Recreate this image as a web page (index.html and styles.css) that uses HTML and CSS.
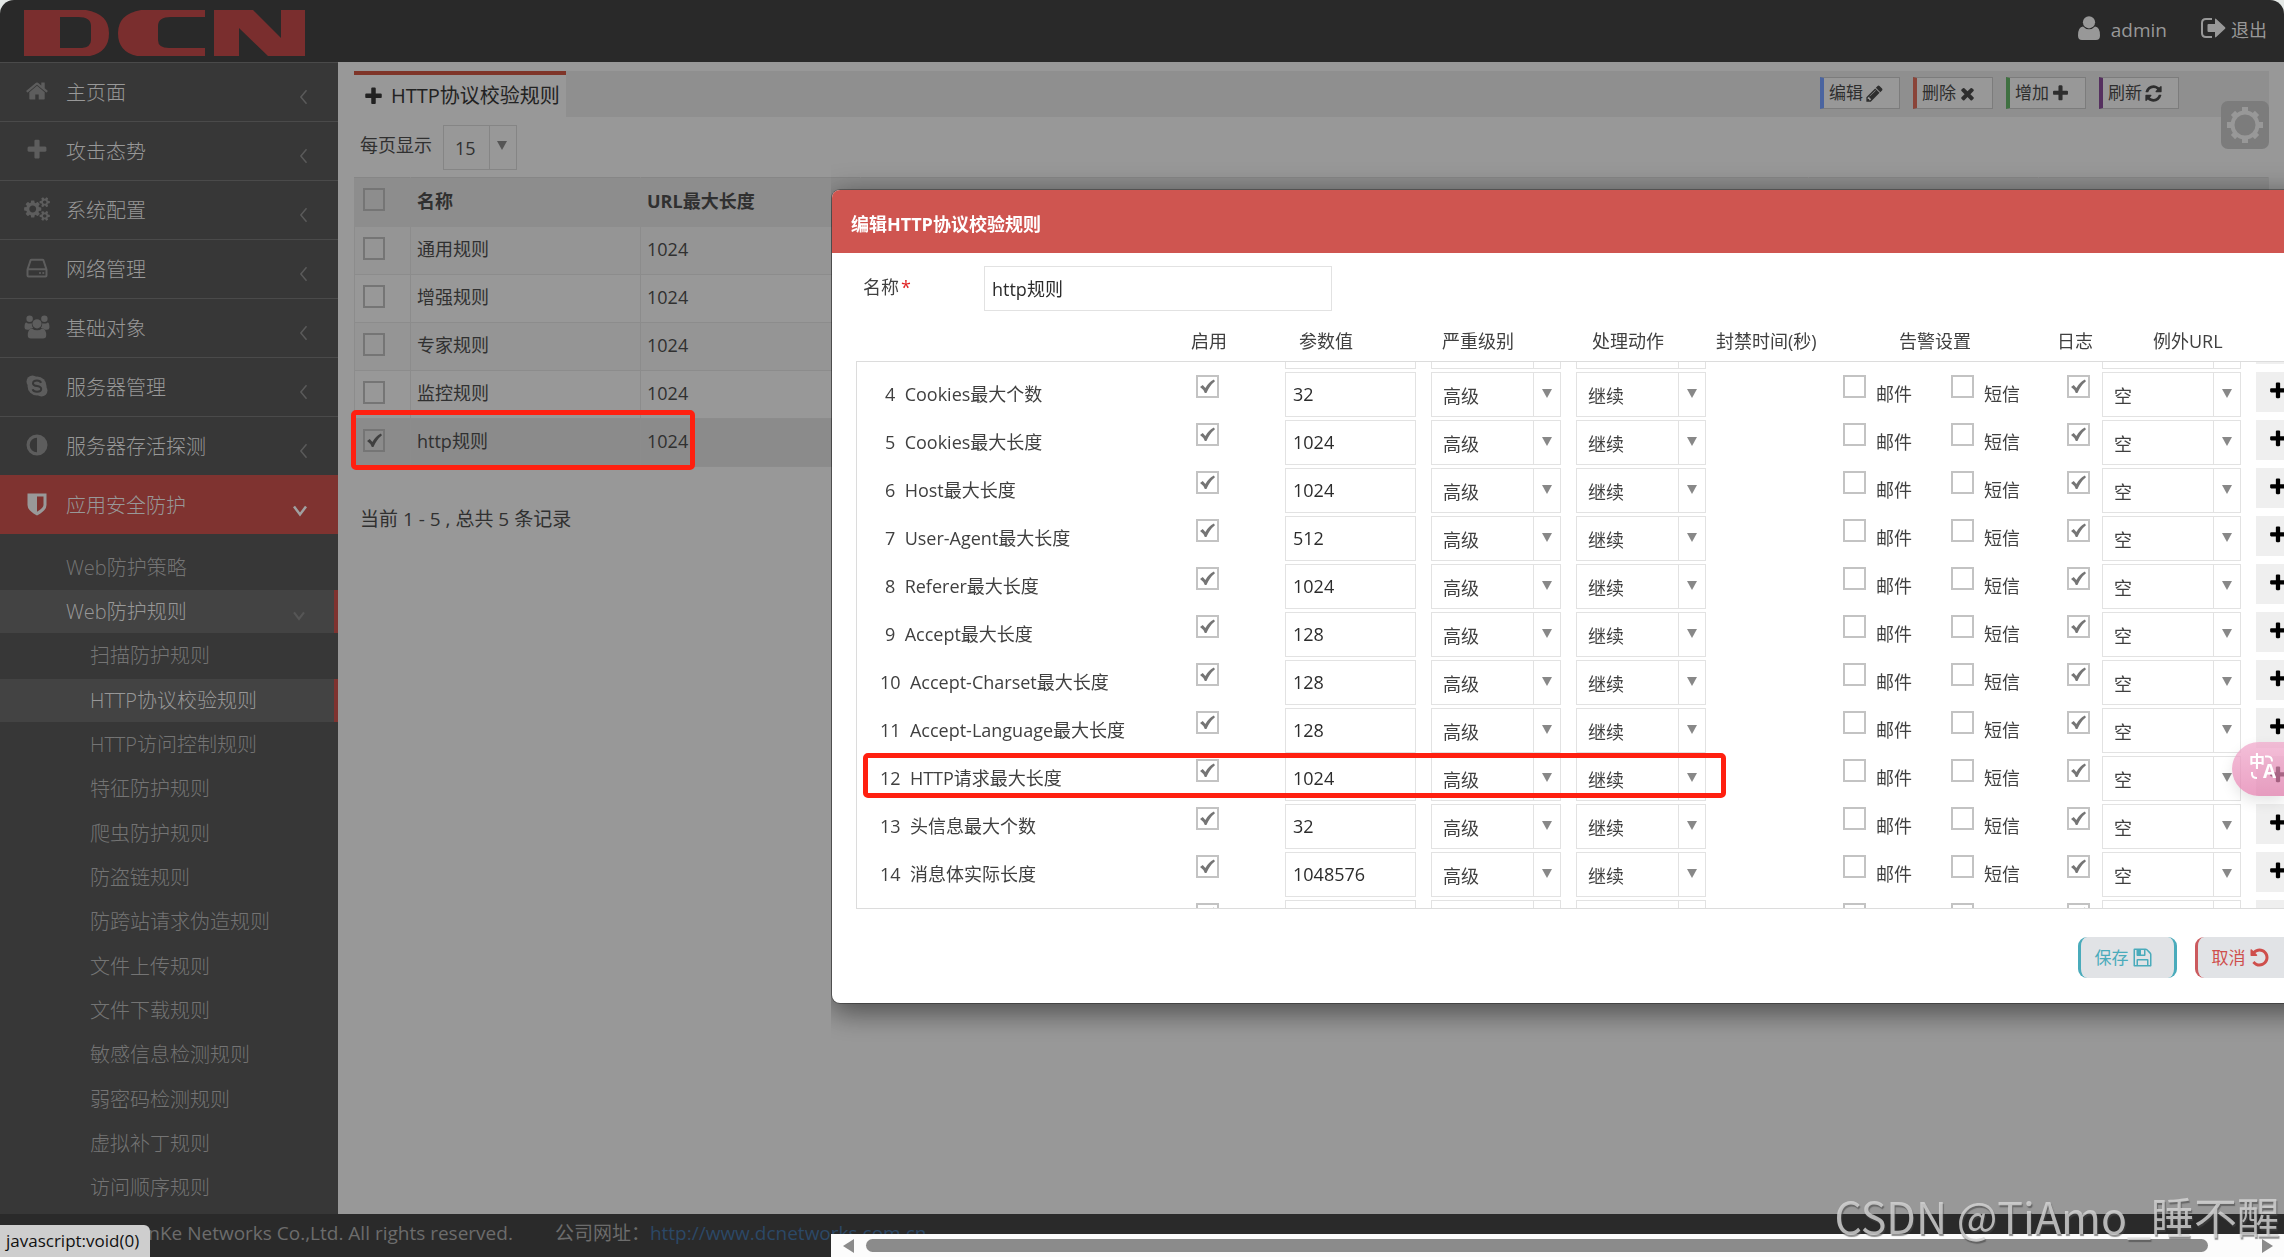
FILE: index.html
```html
<!DOCTYPE html>
<html lang="zh-CN">
<head>
<meta charset="utf-8">
<title>HTTP协议校验规则</title>
<link rel="stylesheet" href="styles.css">
</head>
<body>
<svg class="sprite" aria-hidden="true">
  <symbol id="i-plus" viewBox="0 0 1792 1792"><path d="M1600 736v192q0 40-28 68t-68 28h-416v416q0 40-28 68t-68 28h-192q-40 0-68-28t-28-68v-416h-416q-40 0-68-28t-28-68v-192q0-40 28-68t68-28h416v-416q0-40 28-68t68-28h192q40 0 68 28t28 68v416h416q40 0 68 28t28 68z"/></symbol>
  <symbol id="i-home" viewBox="0 0 1792 1792"><path d="M1472 992v480q0 26-19 45t-45 19h-384v-384h-256v384h-384q-26 0-45-19t-19-45v-480q0-1 .5-3t.5-3l575-474 575 474q1 2 1 6zm223-69l-62 74q-8 9-21 11h-3q-13 0-21-7l-692-577-692 577q-12 8-24 7-13-2-21-11l-62-74q-8-10-7-23.5t11-21.5l719-599q32-26 76-26t76 26l244 204v-195q0-14 9-23t23-9h192q14 0 23 9t9 23v408l219 182q10 8 11 21.5t-7 23.5z"/></symbol>
  <symbol id="i-cogs" viewBox="0 0 1920 1792"><path d="M896 896q0-106-75-181t-181-75-181 75-75 181 75 181 181 75 181-75 75-181zm768 512q0-52-38-90t-90-38-90 38-38 90q0 53 37.5 90.5t90.5 37.5 90.5-37.5 37.5-90.5zm0-1024q0-52-38-90t-90-38-90 38-38 90q0 53 37.5 90.5t90.5 37.5 90.5-37.5 37.5-90.5zm-384 421v185q0 10-7 19.5t-16 10.5l-155 24q-11 35-32 76 34 48 90 115 7 11 7 20 0 12-7 19-23 30-82.5 89.5t-78.5 59.5q-11 0-21-7l-115-90q-37 19-77 31-11 108-23 155-7 24-30 24h-186q-11 0-20-7.5t-10-17.5l-23-153q-34-10-75-31l-118 89q-7 7-20 7-11 0-21-8-144-133-144-160 0-9 7-19 10-14 41-53t47-61q-23-44-35-82l-152-24q-10-1-17-9.5t-7-19.5v-185q0-10 7-19.5t16-10.5l155-24q11-35 32-76-34-48-90-115-7-11-7-20 0-12 7-20 22-30 82-89t79-59q11 0 21 7l115 90q34-18 77-32 11-108 23-154 7-24 30-24h186q11 0 20 7.5t10 17.5l23 153q34 10 75 31l118-89q8-7 20-7 11 0 21 8 144 133 144 160 0 8-7 19-12 16-42 54t-45 60q23 48 34 82l152 23q10 2 17 10.5t7 19.5zm640 533v140q0 16-149 31-12 27-30 52 51 113 51 138 0 4-4 7-122 71-124 71-8 0-46-47t-52-68q-20 2-30 2t-30-2q-14 21-52 68t-46 47q-2 0-124-71-4-3-4-7 0-25 51-138-18-25-30-52-149-15-149-31v-140q0-16 149-31 13-29 30-52-51-113-51-138 0-4 4-7 4-2 35-20t59-34 30-16q8 0 46 46.5t52 67.5q20-2 30-2t30 2q51-71 92-112l6-2q4 0 124 70 4 3 4 7 0 25-51 138 17 23 30 52 149 15 149 31zm0-1024v140q0 16-149 31-12 27-30 52 51 113 51 138 0 4-4 7-122 71-124 71-8 0-46-47t-52-68q-20 2-30 2t-30-2q-14 21-52 68t-46 47q-2 0-124-71-4-3-4-7 0-25 51-138-18-25-30-52-149-15-149-31v-140q0-16 149-31 13-29 30-52-51-113-51-138 0-4 4-7 4-2 35-20t59-34 30-16q8 0 46 46.5t52 67.5q20-2 30-2t30 2q51-71 92-112l6-2q4 0 124 70 4 3 4 7 0 25-51 138 17 23 30 52 149 15 149 31z"/></symbol>
  <symbol id="i-hdd" viewBox="0 0 24 24"><path fill="none" stroke="currentColor" stroke-width="2" stroke-linejoin="round" d="M2.500 13.500 5.500 4.500Q5.800 3.800 6.500 3.800H17.500Q18.200 3.800 18.500 4.500L21.500 13.500V19.500Q21.500 20.500 20.500 20.500H3.500Q2.500 20.500 2.500 19.500ZM2.500 13.200H21.500"/><circle cx="15" cy="17" r="1.100"/><circle cx="18.300" cy="17" r="1.100"/></symbol>
  <symbol id="i-users" viewBox="0 0 28 26"><circle cx="6" cy="4" r="3.500"/><circle cx="22" cy="4" r="3.500"/><path d="M2.500 8Q4 9.300 6 9.300q1.300 0 2.300-.4-.2 3 1.600 5.100-3 .2-4.400 2H3.300Q.5 16 .5 13.500.5 8 2.500 8zM25.500 8Q24 9.300 22 9.300q-1.300 0-2.300-.4.2 3-1.600 5.100 3 .2 4.400 2h2.200q2.800 0 2.800-2.500 0-5.500-2-5.500z"/><circle cx="14" cy="9.500" r="5"/><path d="M8.500 14.500q2.500 2 5.500 2t5.500-2q4.500.5 4.500 7.500 0 3.500-3.500 3.500h-13Q4 25.500 4 22q0-7 4.500-7.500z"/></symbol>
  <symbol id="i-skype" viewBox="0 0 24 24"><circle cx="7.500" cy="7.500" r="6"/><circle cx="16.500" cy="16.500" r="6"/><circle cx="12" cy="12" r="9.500"/><path class="cut" d="M16 8.800Q15.200 6.600 12 6.600q-4 0-4 2.800 0 2 4 2.700 4.200.7 4.200 2.900 0 2.700-4.200 2.700-3.600 0-4.400-2.500"/></symbol>
  <symbol id="i-adjust" viewBox="0 0 24 24"><path fill-rule="evenodd" d="M12 1.500a10.500 10.500 0 1 0 0 21 10.500 10.500 0 1 0 0-21zm0 3.200v14.600a7.300 7.300 0 0 1 0-14.600z"/></symbol>
  <symbol id="i-shield" viewBox="0 0 24 24"><path fill-rule="evenodd" d="M2.500 1.500h19V13q0 5.500-9.500 10.500Q2.500 18.500 2.500 13zM12 4.500v15.300q6.500-3.700 6.500-7V4.500z"/></symbol>
  <symbol id="i-left" viewBox="0 0 12 22"><path fill="none" stroke="currentColor" stroke-width="2" d="M10 2 2.500 11 10 20"/></symbol>
  <symbol id="i-down" viewBox="0 0 16 12"><path fill="none" stroke="currentColor" stroke-width="2.500" d="M2 1.500 8 9.500 14 1.500"/></symbol>
  <symbol id="i-user" viewBox="0 0 22 24"><circle cx="11" cy="6.300" r="6.100"/><path d="M5 10.500q2.500 2.800 6 2.800t6-2.800q5 .5 5 9 0 4.500-4 4.500H4q-4 0-4-4.500 0-8.500 5-9z"/></symbol>
  <symbol id="i-logout" viewBox="0 0 25 20"><path fill="none" stroke="currentColor" stroke-width="2" d="M11 1H5Q1 1 1 5v10q0 4 4 4h6"/><path d="M6.500 7Q6.500 6 7.500 6H14V1.500q0-1.500 1.200-.5l8.900 8.300q.6.700 0 1.400L15.200 19q-1.200 1-1.200-.5V14H7.500q-1 0-1-1z"/></symbol>
  <symbol id="i-pencil" viewBox="0 0 1792 1792"><path d="M491 1536l91-91-235-235-91 91v107h128v128h107zm523-928q0-22-22-22-10 0-17 7l-542 542q-7 7-7 17 0 22 22 22 10 0 17-7l542-542q7-7 7-17zm-54-192l416 416-832 832h-416v-416zm683 96q0 53-37 90l-166 166-416-416 166-165q36-38 90-38 53 0 91 38l235 234q37 39 37 91z"/></symbol>
  <symbol id="i-times" viewBox="0 0 1792 1792"><path d="M1490 1322q0 40-28 68l-136 136q-28 28-68 28t-68-28l-294-294-294 294q-28 28-68 28t-68-28l-136-136q-28-28-28-68t28-68l294-294-294-294q-28-28-28-68t28-68l136-136q28-28 68-28t68 28l294 294 294-294q28-28 68-28t68 28l136 136q28 28 28 68t-28 68l-294 294 294 294q28 28 28 68z"/></symbol>
  <symbol id="i-refresh" viewBox="0 0 1792 1792"><path d="M1639 1056q0 5-1 7-64 268-268 434.5t-478 166.5q-146 0-282.500-55t-243.500-157l-129 129q-19 19-45 19t-45-19-19-45v-448q0-26 19-45t45-19h448q26 0 45 19t19 45-19 45l-137 137q71 66 161 102t187 36q134 0 250-65t186-179q11-17 53-117 8-23 30-23h192q13 0 22.500 9.500t9.500 22.500zm25-800v448q0 26-19 45t-45 19h-448q-26 0-45-19t-19-45 19-45l138-138q-148-137-349-137-134 0-250 65t-186 179q-11 17-53 117-8 23-30 23h-199q-13 0-22.500-9.500t-9.500-22.500v-7q65-268 270-434.500t480-166.500q146 0 284 55.500t245 156.500l130-129q19-19 45-19t45 19 19 45z"/></symbol>
  <symbol id="i-undo" viewBox="0 0 1792 1792"><path d="M1664 896q0 156-61 298t-164 245-245 164-298 61q-172 0-327-72.500t-264-204.500q-7-10-6.500-22.500t8.500-20.500l137-138q10-9 25-9 16 2 23 12 73 95 179 147t225 52q104 0 198.500-40.500t163.500-109.500 109.500-163.500 40.500-198.500-40.500-198.500-109.500-163.500-163.500-109.500-198.500-40.500q-98 0-188 35.500t-160 101.500l137 138q31 30 14 69-17 40-59 40h-448q-26 0-45-19t-19-45v-448q0-42 40-59 39-17 69 14l130 129q107-101 244.500-156.500t284.500-55.500q156 0 298 61t245 164 164 245 61 298z"/></symbol>
  <symbol id="i-save" viewBox="0 0 1792 1792"><path d="M512 1536h768v-384h-768v384zm896 0h128v-896q0-14-10-38.500t-20-34.500l-281-281q-10-10-34-20t-39-10v416q0 40-28 68t-68 28h-576q-40 0-68-28t-28-68v-416h-128v1280h128v-416q0-40 28-68t68-28h832q40 0 68 28t28 68v416zm-384-928v-320q0-13-9.500-22.500t-22.500-9.500h-192q-13 0-22.500 9.500t-9.500 22.500v320q0 13 9.500 22.500t22.500 9.500h192q13 0 22.500-9.500t9.500-22.500zm640 32v928q0 40-28 68t-68 28h-1344q-40 0-68-28t-28-68v-1344q0-40 28-68t68-28h928q40 0 88 20t76 48l280 280q28 28 48 76t20 88z"/></symbol>
  <symbol id="i-gear" viewBox="0 0 36 36"><circle cx="18" cy="18" r="12.500" fill="none" stroke="currentColor" stroke-width="4"/><path d="M15 0h6v6h-6zM15 30h6v6h-6zM0 15h6v6H0zM30 15h6v6h-6z"/><path transform="rotate(45 18 18)" d="M15 1h6v5h-6zM15 30h6v5h-6zM1 15h5v6H1zM30 15h5v6h-5z"/></symbol>
</svg>

<div class="page">
  <header class="topbar">
    <svg class="logo" viewBox="0 0 282 46" role="img" aria-label="DCN">
      <path fill-rule="evenodd" d="M0 0H62Q85 4 85 23T66 46H0ZM36 7V38H58Q67 37 67 30V16Q67 7 54 7Z"/>
      <path d="M181 0H117Q94 4 94 23T113 46H181V38H145Q134 38 134 30V16Q134 7 147 7H181Z"/>
      <path d="M190 0H229L257 28V0H281V46H244L215 18V46H190Z"/>
    </svg>
    <nav class="account">
      <a href="#"><svg class="ic-user"><use href="#i-user"/></svg>admin</a>
      <a href="#" class="logout"><svg class="ic-logout"><use href="#i-logout"/></svg>退出</a>
    </nav>
  </header>

  <div class="middle">
    <nav class="sidebar">
      <a class="item" href="#"><svg class="mi"><use href="#i-home"/></svg><span>主页面</span><svg class="chev"><use href="#i-left"/></svg></a>
      <a class="item" href="#"><svg class="mi"><use href="#i-plus"/></svg><span>攻击态势</span><svg class="chev"><use href="#i-left"/></svg></a>
      <a class="item" href="#"><svg class="mi"><use href="#i-cogs"/></svg><span>系统配置</span><svg class="chev"><use href="#i-left"/></svg></a>
      <a class="item" href="#"><svg class="mi"><use href="#i-hdd"/></svg><span>网络管理</span><svg class="chev"><use href="#i-left"/></svg></a>
      <a class="item" href="#"><svg class="mi"><use href="#i-users"/></svg><span>基础对象</span><svg class="chev"><use href="#i-left"/></svg></a>
      <a class="item" href="#"><svg class="mi"><use href="#i-skype"/></svg><span>服务器管理</span><svg class="chev"><use href="#i-left"/></svg></a>
      <a class="item" href="#"><svg class="mi"><use href="#i-adjust"/></svg><span>服务器存活探测</span><svg class="chev"><use href="#i-left"/></svg></a>
      <a class="item active" href="#"><svg class="mi"><use href="#i-shield"/></svg><span>应用安全防护</span><svg class="chev"><use href="#i-down"/></svg></a>
      <div class="submenu">
        <a href="#">Web防护策略</a>
        <a href="#" class="on">Web防护规则<svg class="chev"><use href="#i-down"/></svg></a>
        <a href="#" class="deep">扫描防护规则</a>
        <a href="#" class="deep on">HTTP协议校验规则</a>
        <a href="#" class="deep">HTTP访问控制规则</a>
        <a href="#" class="deep">特征防护规则</a>
        <a href="#" class="deep">爬虫防护规则</a>
        <a href="#" class="deep">防盗链规则</a>
        <a href="#" class="deep">防跨站请求伪造规则</a>
        <a href="#" class="deep">文件上传规则</a>
        <a href="#" class="deep">文件下载规则</a>
        <a href="#" class="deep">敏感信息检测规则</a>
        <a href="#" class="deep">弱密码检测规则</a>
        <a href="#" class="deep">虚拟补丁规则</a>
        <a href="#" class="deep">访问顺序规则</a>
      </div>
    </nav>

    <main class="content">
      <div class="tabbar">
        <h1 class="tab"><svg><use href="#i-plus"/></svg>HTTP协议校验规则</h1>
        <div class="tools">
          <button class="edit">编辑<svg><use href="#i-pencil"/></svg></button>
          <button class="del">删除<svg><use href="#i-times"/></svg></button>
          <button class="add">增加<svg><use href="#i-plus"/></svg></button>
          <button class="reload">刷新<svg><use href="#i-refresh"/></svg></button>
        </div>
      </div>
      <div class="pagesize">
        <label for="size">每页显示</label>
        <select id="size"><option>15</option></select>
      </div>
      <table class="rules">
        <colgroup><col class="c-check"><col class="c-name"><col class="c-url"><col><col class="c-tail"><col class="c-tail"></colgroup>
        <thead><tr><th><input type="checkbox" aria-label="全选"></th><th>名称</th><th>URL最大长度</th><th></th><th></th><th></th></tr></thead>
        <tbody>
          <tr><td><input type="checkbox" aria-label="通用规则"></td><td>通用规则</td><td>1024</td><td></td><td></td><td></td></tr>
          <tr><td><input type="checkbox" aria-label="增强规则"></td><td>增强规则</td><td>1024</td><td></td><td></td><td></td></tr>
          <tr><td><input type="checkbox" aria-label="专家规则"></td><td>专家规则</td><td>1024</td><td></td><td></td><td></td></tr>
          <tr><td><input type="checkbox" aria-label="监控规则"></td><td>监控规则</td><td>1024</td><td></td><td></td><td></td></tr>
          <tr class="picked"><td><input type="checkbox" aria-label="http规则" checked></td><td>http规则</td><td>1024</td><td></td><td></td><td></td></tr>
        </tbody>
      </table>
      <p class="count">当前 1 - 5 , 总共 5 条记录</p>
    </main>
  </div>

  <footer class="footer">
    <span>YunKe Networks Co.,Ltd. All rights reserved.</span>
    <span>公司网址：<a href="#">http://www.dcnetworks.com.cn</a></span>
  </footer>
</div>

<button class="settings" aria-label="设置"><svg><use href="#i-gear"/></svg></button>

<div class="stage">
  <div class="viewport">
    <form class="modal">
      <h2>编辑HTTP协议校验规则</h2>
      <div class="field">
        <label for="rname">名称<b>*</b></label>
        <input id="rname" type="text" value="http规则">
      </div>
      <table class="params">
        <thead><tr><th></th><th>启用</th><th>参数值</th><th>严重级别</th><th>处理动作</th><th>封禁时间(秒)</th><th>告警设置</th><th>日志</th><th>例外URL</th></tr></thead>
        <tbody id="rows"></tbody>
      </table>
      <div class="actions">
        <button type="button" class="save">保存<svg><use href="#i-save"/></svg></button>
        <button type="button" class="cancel">取消<svg><use href="#i-undo"/></svg></button>
      </div>
    </form>
  </div>
  <div class="hscroll"><i class="to-left"></i><i class="thumb"></i><i class="to-right"></i></div>
</div>

<div class="mark mark-rule"></div>
<div class="mark mark-param"></div>
<div class="translate"><span class="zh">中</span><span class="en">A</span><svg viewBox="0 0 26 26"><path d="M16 2.500h3q4 0 4 5M3 18v2q0 4 5 4"/></svg></div>
<div class="status">javascript:void(0)</div>
<div class="watermark">CSDN @TiAmo_睡不醒</div>
<script src="script.js"></script>
</body>
</html>
```
FILE: styles.css
```css
* { box-sizing: border-box; }

body {
  margin: 0;
  background: #e4e8e6;
  color: #303030;
  font: 18px/24px "Open Sans", "Noto Sans CJK SC", sans-serif;
  overflow: hidden;
}

a { color: inherit; text-decoration: none; }
svg { fill: currentColor; display: block; flex: none; }
button, input, select { font: inherit; color: inherit; margin: 0; }
.sprite { position: absolute; width: 0; height: 0; }

.page { display: flex; flex-direction: column; min-height: 100vh; }

/* top bar */
.topbar {
  display: flex;
  justify-content: space-between;
  align-items: center;
  height: 62px;
  padding: 0 17px 0 24px;
  background: #292929;
  border-radius: 14px 14px 0 0;
}
.logo { width: 282px; height: 46px; margin-top: 4px; color: #7a2e2e; }
.account { display: flex; gap: 34px; padding-bottom: 2px; font-size: 19px; color: #989898; }
.account a { display: flex; align-items: center; }
.account .logout { font-size: 18px; }
.ic-user { width: 22px; height: 24px; margin: 0 11px 4px 0; }
.ic-logout { width: 25px; height: 20px; margin: 0 5px 4px 0; }

/* side menu */
.middle { flex: 1; display: flex; }
.sidebar {
  display: flex;
  flex-direction: column;
  flex: none;
  width: 338px;
  background: #373737;
  font-size: 20px;
  font-weight: 300;
}
.item {
  display: flex;
  align-items: center;
  height: 59px;
  padding: 2px 30px 0 24px;
  border-top: 1px solid #4a4a4a;
  color: #989898;
}
.item span { flex: 1; margin-left: 16px; }
.mi { width: 26px; height: 24px; margin-bottom: 4px; color: #5d5d5d; }
#i-skype .cut { fill: none; stroke: #373737; stroke-width: 2; }
.chev { width: 9px; height: 20px; margin-top: 8px; color: #5a5a5a; }
.active { background: #7f3330; border-color: #7f3330; }
.active .mi { color: #999; }
.active .chev { width: 16px; height: 12px; margin: 10px 0 0; color: #a0a0a0; }
.submenu {
  flex: 1;
  display: flex;
  flex-direction: column;
  justify-content: space-between;
  padding: 12px 0 4px;
  color: #747474;
}
.submenu a {
  display: flex;
  justify-content: space-between;
  align-items: center;
  height: 43px;
  padding: 0 32px 0 66px;
  border-right: 0 solid #7f3330;
}
.submenu .deep { padding-left: 90px; }
.submenu .on { background: #434343; border-right-width: 4px; padding-right: 28px; color: #989898; }
.submenu .chev { width: 14px; height: 10px; color: #565656; }

/* content */
.content { flex: 1; padding: 9px 15px 0 16px; background: #989898; }
.tabbar { display: flex; justify-content: space-between; height: 46px; background: #8f8f8f; }
.tab {
  display: flex;
  align-items: center;
  gap: 7px;
  margin: 0;
  padding: 0 6px 0 9px;
  border-top: 4px solid #7f3529;
  background: #989898;
  font-size: 20px;
  font-weight: 400;
  color: #222;
}
.tab svg { width: 21px; height: 21px; }
.tools { display: flex; align-items: center; gap: 13px; padding: 0 90px 2px 0; }
.tools button {
  display: flex;
  align-items: center;
  gap: 2px;
  width: 80px;
  height: 32px;
  padding: 0 0 0 5px;
  border: 1px solid #7c7c7c;
  border-left: 4px solid #4a64a0;
  background: #989898;
  color: #2e2e2e;
  font-size: 17px;
}
.tools .del { border-left-color: #8a4439; }
.tools .add { border-left-color: #3f7041; }
.tools .reload { border-left-color: #55305f; }
.tools svg { width: 19px; height: 19px; }

.pagesize { display: flex; align-items: center; gap: 11px; padding: 8px 0 7px 6px; }
.pagesize label { margin-bottom: 6px; }

select {
  appearance: none;
  height: 45px;
  padding: 2px 32px 0 11px;
  border: 1px solid #e2e2e2;
  border-radius: 0;
  background:
    url("data:image/svg+xml,%3Csvg xmlns='http://www.w3.org/2000/svg' width='10' height='9'%3E%3Cpath d='M0 0h10L5 9z' fill='%23888'/%3E%3C/svg%3E") no-repeat right 8px top 16px,
    linear-gradient(#e2e2e2, #e2e2e2) no-repeat right 26px top / 1px 100%,
    transparent;
}
.pagesize select {
  width: 74px;
  padding-top: 0;
  border-color: #858585;
  background:
    url("data:image/svg+xml,%3Csvg xmlns='http://www.w3.org/2000/svg' width='10' height='9'%3E%3Cpath d='M0 0h10L5 9z' fill='%23555'/%3E%3C/svg%3E") no-repeat right 9px top 15px,
    linear-gradient(#858585, #858585) no-repeat right 26px top / 1px 100%;
}

input[type="checkbox"] {
  appearance: none;
  display: block;
  flex: none;
  width: 23px;
  height: 23px;
  border: 2px solid #c3c3c3;
  background: transparent;
}
input[type="checkbox"]:checked {
  background: url("data:image/svg+xml,%3Csvg xmlns='http://www.w3.org/2000/svg' viewBox='0 0 16 16'%3E%3Cpath d='M1 8.500 3.500 6.500 6 9.500Q9 4 14 1.500L15 3Q10 7 7 14H5.500Q4 10.500 1 8.500z' fill='%23757575'/%3E%3C/svg%3E") center / 17px no-repeat;
}

.rules { width: 100%; border-collapse: collapse; table-layout: fixed; }
.rules th, .rules td {
  height: 48px;
  padding: 0 6px 3px;
  border: 1px solid #8c8c8c;
  text-align: left;
}
.rules tr :first-child { padding-left: 8px; }
.rules th { height: 49px; background: #8d8d8d; border-color: #868686 #8d8d8d #8d8d8d; }
.rules tbody tr:nth-child(odd) { background: #959595; }
.rules tbody tr.picked { background: #8b8b8b; }
.rules input { width: 22px; margin-bottom: 2px; border-color: #757575; }
.rules input:checked {
  background-image: url("data:image/svg+xml,%3Csvg xmlns='http://www.w3.org/2000/svg' viewBox='0 0 16 16'%3E%3Cpath d='M1 8.500 3.500 6.500 6 9.500Q9 4 14 1.500L15 3Q10 7 7 14H5.500Q4 10.500 1 8.500z' fill='%23404040'/%3E%3C/svg%3E");
}
.c-check { width: 56px; }
.c-name, .c-tail { width: 230px; }
.c-url { width: 220px; }
.count { margin: 40px 6px; font-size: 19px; }

.footer {
  display: flex;
  gap: 42px;
  height: 43px;
  padding: 7px 0 0 126px;
  background: #2a2a2a;
  color: #6c6c6c;
  font-size: 19px;
}
.footer a { color: #2c4866; }

.settings {
  position: fixed;
  top: 101px;
  right: 15px;
  width: 48px;
  height: 48px;
  padding: 6px;
  border: 0;
  border-radius: 7px;
  background: #7c7c7c;
  color: #989898;
}
.settings svg { width: 36px; height: 36px; }

/* dialog layer */
.stage {
  position: fixed;
  top: 0;
  right: 0;
  bottom: 0;
  left: 831px;
  display: flex;
  flex-direction: column;
}
.viewport { flex: 1; overflow: hidden; padding: 190px 0 0 1px; }
.modal {
  width: calc(100% + 58px);
  border-radius: 8px;
  background: #fff;
  color: #404040;
  box-shadow: 0 5px 30px rgba(0, 0, 0, .4), 0 0 0 1px rgba(0, 0, 0, .3), 0 12px 28px rgba(0, 0, 0, .2);
}
.modal h2 {
  margin: 0;
  padding: 22px 19px 17px;
  border-radius: 8px 8px 0 0;
  background: #cf5550;
  color: #fff;
  font-size: 18px;
  line-height: 24px;
}
.field { display: flex; align-items: center; padding: 13px 30px 0; }
.field label { width: 122px; margin-bottom: 4px; padding-left: 1px; }
.field b { margin-left: 2px; color: #e02222; font-weight: 400; }
.modal input[type="text"] {
  height: 45px;
  padding: 0 7px 2px;
  border: 1px solid #e2e2e2;
  background: transparent;
  color: #2c2c2c;
}
.field input { width: 348px; }

.params { display: block; margin: 0 24px; }
.params thead, .params tr, .params th { display: block; padding: 0; }
.params thead tr {
  display: grid;
  grid-template-columns: 335px 108px 143px 150px 124px 183px 158px 96px 1fr;
  height: 50px;
  align-items: center;
  padding-top: 10px;
}
.params th { font-weight: 400; text-align: left; }
.params tbody { display: block; height: 548px; border: 1px solid #dcdcdc; overflow: hidden; }
.params tbody tr {
  display: grid;
  grid-template-columns: 339px 89px 146px 145px 267px 108px 116px 35px 154px 44px;
  height: 48px;
}
.params tbody td { padding: 0; display: flex; align-items: flex-start; }
.params tbody .label { padding: 10px 0 0 23px; white-space: pre; }
.params tbody .short { padding-left: 28px; }
.params label { display: flex; gap: 10px; }
.params label span { padding-top: 10px; }
.params input[type="checkbox"] { margin-top: 3px; }
.params input[type="text"] { width: 131px; }
.params select { width: 130px; }
.params .url select { width: 139px; }
.params .plus { display: grid; place-items: center; width: 44px; height: 40px; padding: 0 0 3px; border: 0; background: #efefef; color: #000; }
.params .plus svg { width: 20px; height: 20px; }

.actions { display: flex; justify-content: flex-end; gap: 18px; padding: 28px 48px 25px; }
.actions button {
  display: flex;
  align-items: center;
  justify-content: center;
  gap: 3px;
  width: 99px;
  height: 41px;
  padding: 0 8px 0 0;
  border: solid #4aabbb;
  border-width: 0 3px;
  border-radius: 9px;
  background: #e1e3e6;
  color: #4aabbb;
  font-size: 17px;
}
.actions svg { width: 21px; height: 21px; }
.actions .cancel { border-color: #cb5a5e; color: #cf4f4c; }

.hscroll {
  display: flex;
  align-items: center;
  gap: 12px;
  height: 23px;
  padding: 0 11px 0 12px;
  background: #fcfcfc;
}
.thumb { flex: 1; height: 13px; margin-right: 42px; border-radius: 7px; background: #8b8b8b; }
.to-left, .to-right { border: 7px solid transparent; border-right: 11px solid #8b8b8b; border-left: 0; }
.to-right { border-left: 11px solid #8b8b8b; border-right: 0; }

/* things that float over the page */
.mark { position: absolute; border: 5px solid #ff2010; border-radius: 5px; }
.mark-rule { left: 351px; top: 410px; width: 344px; height: 60px; }
.mark-param { left: 863px; top: 753px; width: 863px; height: 45px; }

.translate {
  position: fixed;
  right: 0;
  top: 742px;
  width: 52px;
  height: 54px;
  border-radius: 27px 0 0 27px;
  background: linear-gradient(rgba(240, 170, 204, .75), rgba(226, 120, 170, .7));
  box-shadow: 0 6px 14px rgba(0, 0, 0, .1);
  color: #fff;
  font-weight: 700;
}
.translate span { position: absolute; line-height: 18px; }
.translate .zh { left: 17px; top: 10px; font-size: 16px; }
.translate .en { left: 31px; top: 20px; font-size: 19px; }
.translate svg { position: absolute; left: 17px; top: 12px; width: 26px; height: 26px; fill: none; stroke: #fff; stroke-width: 2; }

.status {
  position: fixed;
  left: 0;
  bottom: 0;
  height: 32px;
  width: 150px;
  padding: 4px 0 0 6px;
  border-radius: 0 6px 0 0;
  background: #cecece;
  color: #111;
  font: 17px/24px "Open Sans", sans-serif;
  white-space: nowrap;
}
.watermark {
  position: fixed;
  right: 4px;
  bottom: 13px;
  font: 400 43px/58px "Noto Sans CJK SC", sans-serif;
  color: rgba(215, 215, 215, .8);
  text-shadow: 1px 2px 1px rgba(70, 70, 70, .6);
  white-space: nowrap;
}
```
FILE: script.js
```js
const params = [
  [3],
  [4, 'Cookies最大个数', 32],
  [5, 'Cookies最大长度', 1024],
  [6, 'Host最大长度', 1024],
  [7, 'User-Agent最大长度', 512],
  [8, 'Referer最大长度', 1024],
  [9, 'Accept最大长度', 128],
  [10, 'Accept-Charset最大长度', 128],
  [11, 'Accept-Language最大长度', 128],
  [12, 'HTTP请求最大长度', 1024],
  [13, '头信息最大个数', 32],
  [14, '消息体实际长度', 1048576],
  [15]
];

const select = (label, value) =>
  `<select aria-label="${label}"><option>${value}</option></select>`;

const row = ([no, name, value]) => {
  const text = (s) => (name ? s : '');
  return `
  <tr>
    <td class="label${no < 10 ? ' short' : ''}">${text(`${no}  ${name}`)}</td>
    <td><input type="checkbox" aria-label="启用" checked></td>
    <td><input type="text" aria-label="参数值" value="${text(value)}"></td>
    <td>${select('严重级别', text('高级'))}</td>
    <td>${select('处理动作', text('继续'))}</td>
    <td><label><input type="checkbox" aria-label="邮件"><span>${text('邮件')}</span></label></td>
    <td><label><input type="checkbox" aria-label="短信"><span>${text('短信')}</span></label></td>
    <td><input type="checkbox" aria-label="日志" checked></td>
    <td class="url">${select('例外URL', text('空'))}</td>
    <td><button type="button" class="plus" aria-label="增加"><svg><use href="#i-plus"/></svg></button></td>
  </tr>`;
};

const rows = document.getElementById('rows');
rows.innerHTML = params.map(row).join('');

// open the list on the fourth parameter
rows.scrollTop = 38;
```
